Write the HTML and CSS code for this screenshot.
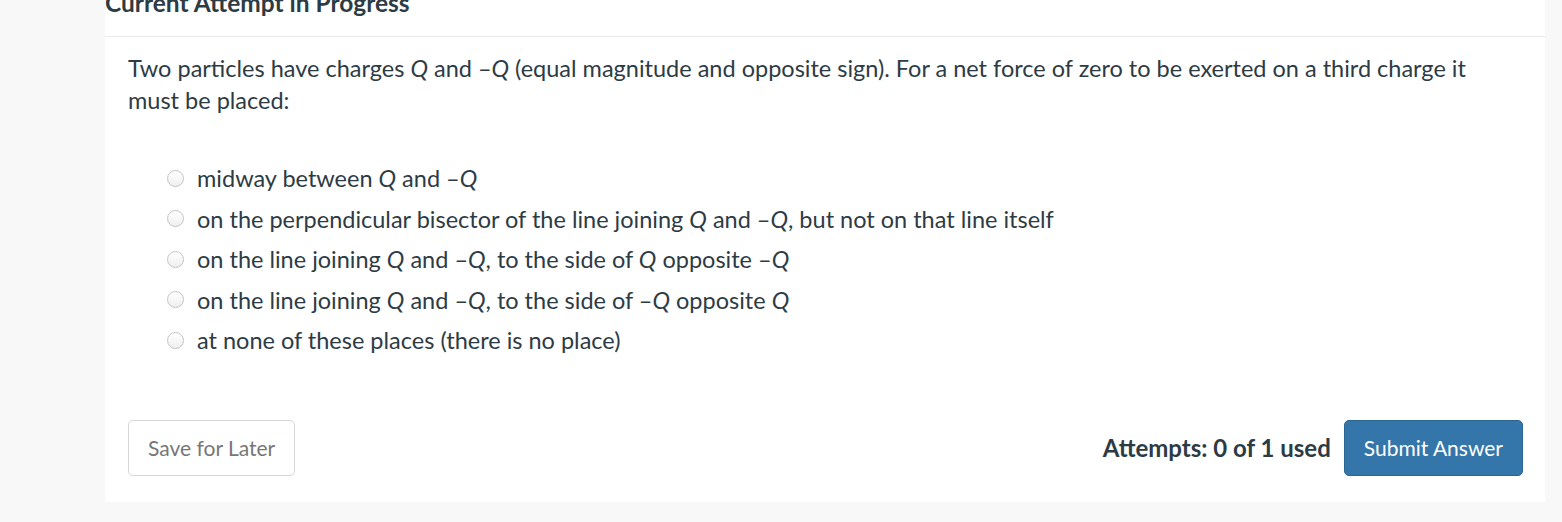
FILE: index.html
```html
<!DOCTYPE html>
<html>
<head>
<meta charset="utf-8">
<link rel="stylesheet" href="styles.css">
</head>
<body>
<div class="page">
  <div class="panel">
    <h2 class="heading">Current Attempt in Progress</h2>
    <div class="question">
      <p class="stem">Two particles have charges <i>Q</i> and –<i>Q</i> (equal magnitude and opposite sign). For a net force of zero to be exerted on a third charge it must be placed:</p>
      <ul class="options">
        <li class="option"><span class="radio"></span><span>midway between <i>Q</i> and –<i>Q</i></span></li>
        <li class="option"><span class="radio"></span><span>on the perpendicular bisector of the line joining <i>Q</i> and –<i>Q</i>, but not on that line itself</span></li>
        <li class="option"><span class="radio"></span><span>on the line joining <i>Q</i> and –<i>Q</i>, to the side of <i>Q</i> opposite –<i>Q</i></span></li>
        <li class="option"><span class="radio"></span><span>on the line joining <i>Q</i> and –<i>Q</i>, to the side of –<i>Q</i> opposite <i>Q</i></span></li>
        <li class="option"><span class="radio"></span><span>at none of these places (there is no place)</span></li>
      </ul>
    </div>
    <div class="footer">
      <button class="btn btn-save">Save for Later</button>
      <div class="right">
        <span class="attempts">Attempts: 0 of 1 used</span>
        <button class="btn btn-submit">Submit Answer</button>
      </div>
    </div>
  </div>
</div>
</body>
</html>
```
FILE: styles.css
```css
html, body {
  margin: 0;
  padding: 0;
  background: #f8f8f8;
  font-family: Lato, "Open Sans", sans-serif;
  color: #2d3b45;
}
.page {
  padding: 0 17px 20px 105px;
  overflow: hidden;
  height: 522px;
  box-sizing: border-box;
}
.panel {
  display: flow-root;
  background: #fff;
  height: 502px;
}
.heading {
  margin: -12px 0 0 0;
  font-size: 24.5px;
  line-height: 30px;
  font-weight: 700;
  padding-bottom: 18px;
  border-bottom: 1px solid #e8eaec;
}
.question {
  padding: 0 23px;
}
.stem {
  margin: 0;
  padding-top: 15px;
  font-size: 23.5px;
  line-height: 32px;
}
.options {
  list-style: none;
  margin: 0;
  padding: 42px 0 0 39px;
}
.option {
  display: flex;
  align-items: center;
  font-size: 23.5px;
  height: 40.5px;
}
.radio {
  width: 15px;
  height: 15px;
  border: 1px solid #c4c4c4;
  border-radius: 50%;
  background: linear-gradient(#ffffff, #efefef);
  margin-right: 13px;
  flex: none;
}
.footer {
  display: flex;
  justify-content: space-between;
  align-items: center;
  padding: 59px 22px 0 23px;
}
.right {
  display: flex;
  align-items: center;
  gap: 13px;
}
.attempts {
  font-weight: 700;
  font-size: 24px;
}
.btn {
  font-family: Lato, "Open Sans", sans-serif;
  font-size: 21px;
  height: 56px;
  border-radius: 5px;
  padding: 0 19px;
  cursor: pointer;
}
.btn-save {
  background: #fff;
  color: #777;
  border: 1px solid #d6d6d6;
}
.btn-submit {
  background: #3476a9;
  color: #fff;
  border: 1px solid #2b6591;
}
```
